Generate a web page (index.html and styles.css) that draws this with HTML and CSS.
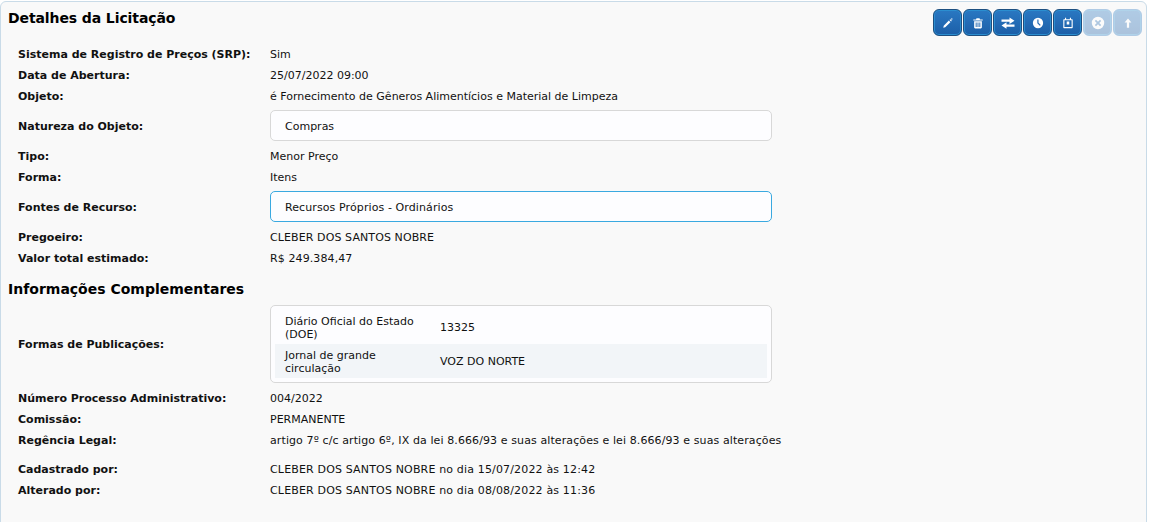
FILE: index.html
```html
<!DOCTYPE html>
<html lang="pt">
<head>
<meta charset="utf-8">
<title>Detalhes da Licitação</title>
<link rel="stylesheet" href="styles.css">
</head>
<body>
<main class="panel">
  <header class="panel-head">
    <h2 class="title title-main">Detalhes da Licitação</h2>
    <div class="actions">
      <button class="btn"><svg viewBox="0 0 14 14"><path d="M1.500 12.500l.5-2.300 6-6 1.800 1.800-6 6zM8.800 3.400l.9-.9 1.800 1.800-.9.9z" fill="#fff"/><path d="M11.500.8l.4 1.100 1.100.4-1.100.4-.4 1.100-.4-1.100-1.100-.4 1.100-.4z" fill="#fff"/></svg></button>
      <button class="btn"><svg viewBox="0 0 14 14"><path d="M1.500 2.800h3.200l.5-1.300h3.600l.5 1.300h3.200v1.300h-11zM2.500 5h9v7c0 .8-.5 1.300-1.200 1.300H3.700c-.7 0-1.200-.5-1.200-1.300zM4.300 6.300v5.500h1.100V6.300zM6.450 6.300v5.500h1.100V6.300zM8.600 6.300v5.500h1.100V6.300z" fill="#fff" fill-rule="evenodd"/></svg></button>
      <button class="btn btn-wide"><svg viewBox="0 0 14 14"><path d="M.5 3.500h8V1.500L13.500 4.800 8.500 8V5.800H.5zM13.500 8.500h-8V6.300L.5 9.500l5 3.200v-2h8z" fill="#fff"/></svg></button>
      <button class="btn"><svg viewBox="0 0 14 14"><path d="M7 1a6 6 0 1 0 0 12A6 6 0 0 0 7 1zM6.200 3h1.400v3.700l2.600 2.500-1.100 1.100-2.900-3z" fill="#fff" fill-rule="evenodd"/></svg></button>
      <button class="btn"><svg viewBox="0 0 14 14"><path d="M3.500 1h1.300v1.500h4.400V1h1.300v1.500h1.200c.5 0 .8.300.8.800v9c0 .5-.3.700-.8.700H2.300c-.5 0-.8-.2-.8-.7v-9c0-.5.3-.8.800-.8h1.200zM2.800 3.800v8h8.400v-8zM5.500 5.300h3v3.500h-3z" fill="#fff" fill-rule="evenodd"/></svg></button>
      <button class="btn btn-off btn-wide"><svg viewBox="0 0 14 14"><path d="M7 .8a6.200 6.200 0 1 0 0 12.400A6.200 6.200 0 0 0 7 .8zM5 3.800L7 5.800l2-2 1.200 1.200-2 2 2 2L9 10.200l-2-2-2 2L3.800 9l2-2-2-2z" fill="#fff" fill-rule="evenodd"/></svg></button>
      <button class="btn btn-off"><svg viewBox="0 0 14 14"><path d="M7 1.800L11 6.500H8.300v6H5.700v-6H3z" fill="#fff"/></svg></button>
    </div>
  </header>

  <dl class="rows rows-first">
    <div class="row"><dt>Sistema de Registro de Preços (SRP):</dt><dd>Sim</dd></div>
    <div class="row"><dt>Data de Abertura:</dt><dd>25/07/2022 09:00</dd></div>
    <div class="row"><dt>Objeto:</dt><dd>é Fornecimento de Gêneros Alimentícios e Material de Limpeza</dd></div>
    <div class="row row-box"><dt>Natureza do Objeto:</dt><dd><div class="box">Compras</div></dd></div>
    <div class="row"><dt>Tipo:</dt><dd>Menor Preço</dd></div>
    <div class="row"><dt>Forma:</dt><dd>Itens</dd></div>
    <div class="row row-box"><dt>Fontes de Recurso:</dt><dd><div class="box box-focus"><span class="wide">Recursos Próprios - Ordinários</span></div></dd></div>
    <div class="row"><dt>Pregoeiro:</dt><dd><span class="wide">CLEBER DOS SANTOS NOBRE</span></dd></div>
    <div class="row"><dt>Valor total estimado:</dt><dd><span class="wide">R$ 249.384,47</span></dd></div>
  </dl>

  <h2 class="title title-sub">Informações Complementares</h2>

  <dl class="rows">
    <div class="row row-pub"><dt>Formas de Publicações:</dt><dd>
      <div class="pub-box">
        <div class="pub"><span class="pub-name">Diário Oficial do Estado (DOE)</span><span>13325</span></div>
        <div class="pub pub-alt"><span class="pub-name">Jornal de grande circulação</span><span>VOZ DO NORTE</span></div>
      </div>
    </dd></div>
    <div class="row"><dt>Número Processo Administrativo:</dt><dd>004/2022</dd></div>
    <div class="row"><dt>Comissão:</dt><dd>PERMANENTE</dd></div>
    <div class="row"><dt>Regência Legal:</dt><dd><span class="wide">artigo 7º c/c artigo 6º, IX da lei 8.666/93 e suas alterações e lei 8.666/93 e suas alterações</span></dd></div>
    <div class="row row-gap"><dt>Cadastrado por:</dt><dd><span class="wider">CLEBER DOS SANTOS NOBRE no dia 15/07/2022 às 12:42</span></dd></div>
    <div class="row"><dt>Alterado por:</dt><dd><span class="wider">CLEBER DOS SANTOS NOBRE no dia 08/08/2022 às 11:36</span></dd></div>
  </dl>
</main>
</body>
</html>
```
FILE: styles.css
```css
* { box-sizing: border-box; }
html, body { margin: 0; height: 100%; overflow: hidden; background: #fff; }
body { padding: 1px 3px 0 0; font-family: "DejaVu Sans", Verdana, sans-serif; font-size: 11px; color: #111; }
.panel {
  height: 530px;
  background: #f9f9f9;
  border: 1px solid #c9dbe8;
  border-radius: 6px;
  padding: 0 0 0 7px;
}
.panel-head { display: flex; justify-content: space-between; align-items: flex-start; }
.title { margin: 0; font-size: 14px; font-weight: bold; line-height: 18px; color: #000; padding-top: 7px; }
.title-main { letter-spacing: -.1px; }
.actions { display: flex; gap: 1px; padding: 7px 4px 0 0; }
.btn {
  width: 29px; height: 27px; padding: 0;
  display: flex; align-items: center; justify-content: center;
  background: linear-gradient(#2a78c2, #1c5fa8);
  border: 1px solid #1d4f80;
  box-shadow: inset 0 0 0 1px #2b8ed0;
  border-radius: 6px;
}
.btn svg { width: 12px; height: 12px; display: block; }
.btn-wide svg { width: 14px; height: 14px; }
.btn-off { opacity: .35; border-color: #2a78c2; }
.rows { margin: 0; padding-left: 10px; }
.rows-first { margin-top: 8px; }
.row { display: grid; grid-template-columns: 252px 502px; align-items: center; min-height: 21px; }
dt { font-weight: bold; }
dd { margin: 0; white-space: nowrap; }
.wide { letter-spacing: .1px; }
.wider { letter-spacing: .16px; }
.row-box { padding: 3px 0; }
.row-box dd { margin-bottom: 2px; }
.box {
  height: 31px; display: flex; align-items: center; padding: 2px 14px 0;
  background: #fdfdff; border: 1px solid #d8d8d8; border-radius: 5px;
}
.box-focus { border-color: #3aa9e0; }
.title-sub { padding-top: 11px; padding-bottom: 7px; }
.row-pub { margin-bottom: 5px; }
.pub-box {
  background: #fdfdff; border: 1px solid #d8d8d8; border-radius: 5px;
  padding: 4px;
}
.pub { display: grid; grid-template-columns: 155px 1fr; align-items: center; padding: 0 10px; min-height: 34px; line-height: 13px; white-space: normal; }
.pub-name { width: 140px; padding-top: 2px; }
.pub-alt { background: #f2f5f8; }
.row-gap { margin-top: 8px; }
```
